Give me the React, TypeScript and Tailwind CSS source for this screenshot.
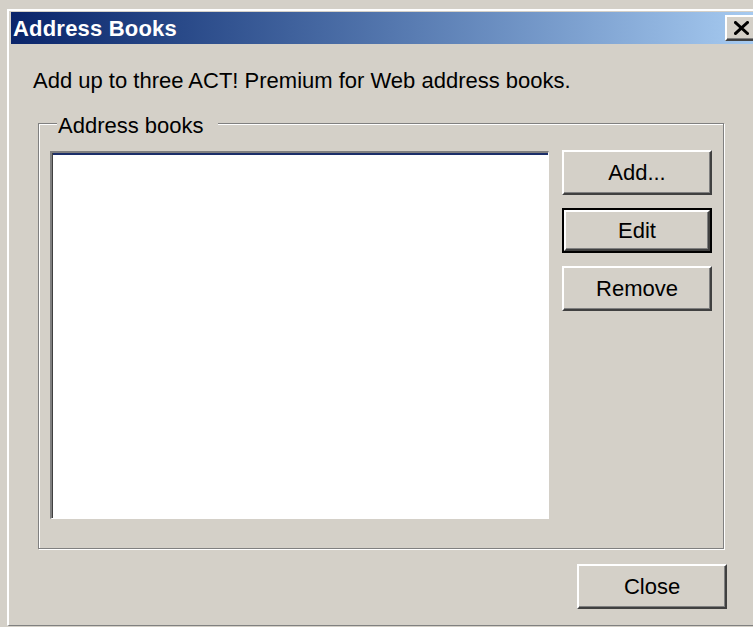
import { type ReactNode } from 'react'

const face = 'bg-[#d4d0c8]'
const font = "font-['Liberation_Sans',Arial,sans-serif]"

// Classic raised 3D push button
function PushButton({ children, isDefault = false }: { children: ReactNode; isDefault?: boolean }) {
  const bevel =
    'flex h-full w-full items-center justify-center border-2 border-t-white border-l-white border-r-[#404040] border-b-[#404040] shadow-[inset_-1px_-1px_0_#808080]'
  return (
    <div className={`h-[45px] w-[150px] shrink-0 ${face} ${isDefault ? 'border-2 border-black' : ''}`}>
      <div className={bevel}>
        <span className="text-[22px] leading-none text-black">{children}</span>
      </div>
    </div>
  )
}

function CloseGlyph() {
  return (
    <svg width="15" height="14" viewBox="0 0 15 14" className="block">
      <path d="M1.5 1.5 L13.5 12.5 M13.5 1.5 L1.5 12.5" stroke="#000" strokeWidth="3" strokeLinecap="square" />
    </svg>
  )
}

export default function App() {
  return (
    <div className={`h-[627px] w-[753px] overflow-hidden ${face} pl-[7px] pt-[9px] ${font}`}>
      <div className="flex h-[617px] flex-col border-b border-l-2 border-t-2 border-b-[#808080] border-l-white border-t-white pl-[2px] pt-[1px]">
        {/* title bar */}
        <div className="flex h-[32px] shrink-0 items-center justify-between bg-gradient-to-r from-[#0a246a] to-[#a6caf0] pl-[2px]">
          <span className="pt-[2px] text-[22px] font-bold leading-[30px] tracking-[0.2px] text-white">Address Books</span>
          <div className="flex h-[26px] w-[28px] items-center justify-center border-2 border-r-0 border-t-white border-l-white border-b-[#404040] bg-[#d4d0c8] shadow-[inset_0_-1px_0_#808080] pl-[2px]">
            <CloseGlyph />
          </div>
        </div>

        {/* dialog body */}
        <div className="flex flex-1 flex-col text-black">
          <p className="ml-[22px] mt-[24px] text-[22px] leading-[26px]">
            Add up to three ACT! Premium for Web address books.
          </p>

          <div className="ml-[27px] mr-[29px] mt-[29px] h-[426px] border border-[#808080] shadow-[inset_1px_1px_0_#fff,1px_1px_0_#fff]">
            <div className={`-mt-[9px] ml-[18px] w-fit pl-[1px] pr-[14px] text-[22px] leading-[22px] ${face}`}>
              Address books
            </div>
            <div className="mt-[14px] flex gap-[13px] pl-[11px]">
              <div className="h-[368px] w-[499px] border-l-2 border-t-2 border-r border-b border-l-[#808080] border-t-[#808080] border-r-white border-b-white bg-white shadow-[inset_1px_0_0_#404040,inset_0_2px_0_#1c2f6a]" />
              <div className="-mt-[1px] flex flex-col gap-[13px]">
                <PushButton>Add...</PushButton>
                <PushButton isDefault>Edit</PushButton>
                <PushButton>Remove</PushButton>
              </div>
            </div>
          </div>

          <div className="mr-[26px] mt-[15px] flex justify-end">
            <PushButton>Close</PushButton>
          </div>
        </div>
      </div>
    </div>
  )
}
